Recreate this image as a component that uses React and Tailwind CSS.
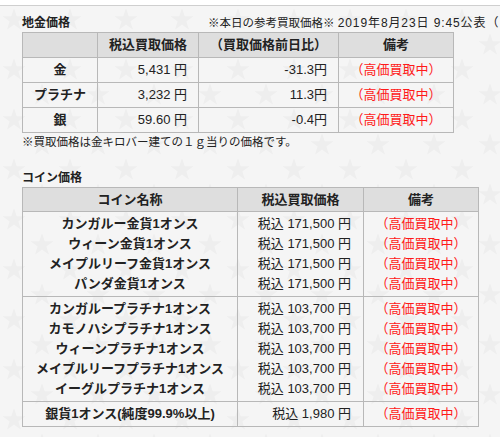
import React from "react";

const goldRows = [
  { name: "金", price: "5,431 円", diff: "-31.3円" },
  { name: "プラチナ", price: "3,232 円", diff: "11.3円" },
  { name: "銀", price: "59.60 円", diff: "-0.4円" },
];

const coinGroups = [
  {
    price: "税込 171,500 円",
    names: [
      "カンガルー金貨1オンス",
      "ウィーン金貨1オンス",
      "メイプルリーフ金貨1オンス",
      "パンダ金貨1オンス",
    ],
  },
  {
    price: "税込 103,700 円",
    names: [
      "カンガループラチナ1オンス",
      "カモノハシプラチナ1オンス",
      "ウィーンプラチナ1オンス",
      "メイプルリーフプラチナ1オンス",
      "イーグルプラチナ1オンス",
    ],
  },
  {
    price: "税込 1,980 円",
    names: ["銀貨1オンス(純度99.9%以上)"],
  },
];

const REMARK = "（高価買取中）";

function StarBackground() {
  const star =
    "0,-12 2.7,-3.72 11.41,-3.71 4.37,1.42 7.05,9.71 0,4.6 -7.05,9.71 -4.37,1.42 -11.41,-3.71 -2.7,-3.72";
  return (
    <svg className="absolute inset-0 w-full h-full" aria-hidden="true">
      <defs>
        <pattern id="stars" width="56" height="50" patternUnits="userSpaceOnUse">
          <polygon points={star} transform="translate(14 14)" fill="#eeeeee" />
          <polygon points={star} transform="translate(42 39)" fill="#eeeeee" />
        </pattern>
      </defs>
      <rect width="100%" height="100%" fill="url(#stars)" />
    </svg>
  );
}

export default function App() {
  const cell = "border border-[#b8b8b8] p-0";
  return (
    <div className="relative w-[500px] h-[437px] overflow-hidden bg-white text-[#222] font-['Liberation_Sans','Noto_Sans_CJK_JP',sans-serif]">
      <div className="h-[6px] bg-white border-b border-[#cfcfcf]" />

      <div className="relative bg-[#f5f5f5] h-[431px]">
        <StarBackground />

        <div className="relative pl-[22px] pt-[8px]">
          {/* 地金価格 */}
          <div className="flex items-center h-[18px] whitespace-nowrap">
            <span className="w-[186px] shrink-0 text-[12px] font-bold">地金価格</span>
            <span className="text-[11.5px]">
              ※本日の参考買取価格※{" "}
              <span className="text-[12px] tracking-[0.9px]">2019年8月23日 9:45公表（</span>
            </span>
          </div>

          <table className="border-collapse table-fixed w-[431px] text-[13px] leading-[24px]">
            <colgroup>
              <col className="w-[75px]" />
              <col className="w-[101px]" />
              <col className="w-[140px]" />
              <col className="w-[115px]" />
            </colgroup>
            <thead>
              <tr className="bg-[#dedede] font-bold">
                <th className={cell}></th>
                <th className={cell}>税込買取価格</th>
                <th className={cell}>（買取価格前日比）</th>
                <th className={cell}>備考</th>
              </tr>
            </thead>
            <tbody>
              {goldRows.map((row) => (
                <tr key={row.name}>
                  <td className={`${cell} text-center font-bold`}>{row.name}</td>
                  <td className={`${cell} text-right pr-[11px]`}>{row.price}</td>
                  <td className={`${cell} text-right pr-[11px]`}>{row.diff}</td>
                  <td className={`${cell} text-center text-[#ff1a1a]`}>{REMARK}</td>
                </tr>
              ))}
            </tbody>
          </table>

          <p className="h-[18px] leading-[18px] text-[11.5px]">
            ※買取価格は金キロバー建ての１ｇ当りの価格です。
          </p>

          {/* コイン価格 */}
          <h2 className="mt-[18px] h-[18px] leading-[18px] text-[12px] font-bold">コイン価格</h2>

          <table className="border-collapse table-fixed w-[456px] text-[13px] leading-[20px]">
            <colgroup>
              <col className="w-[215px]" />
              <col className="w-[126px]" />
              <col className="w-[115px]" />
            </colgroup>
            <thead>
              <tr className="bg-[#dedede] font-bold leading-[23px]">
                <th className={cell}>コイン名称</th>
                <th className={cell}>税込買取価格</th>
                <th className={cell}>備考</th>
              </tr>
            </thead>
            <tbody>
              {coinGroups.map((group) => (
                <tr key={group.price}>
                  <td className={`${cell} py-[2px] text-center font-bold`}>
                    {group.names.map((n) => (
                      <div key={n}>{n}</div>
                    ))}
                  </td>
                  <td className={`${cell} py-[2px] text-right pr-[12px]`}>
                    {group.names.map((n) => (
                      <div key={n}>{group.price}</div>
                    ))}
                  </td>
                  <td className={`${cell} py-[2px] text-center text-[#ff1a1a]`}>
                    {group.names.map((n) => (
                      <div key={n}>{REMARK}</div>
                    ))}
                  </td>
                </tr>
              ))}
            </tbody>
          </table>
        </div>
      </div>
    </div>
  );
}
